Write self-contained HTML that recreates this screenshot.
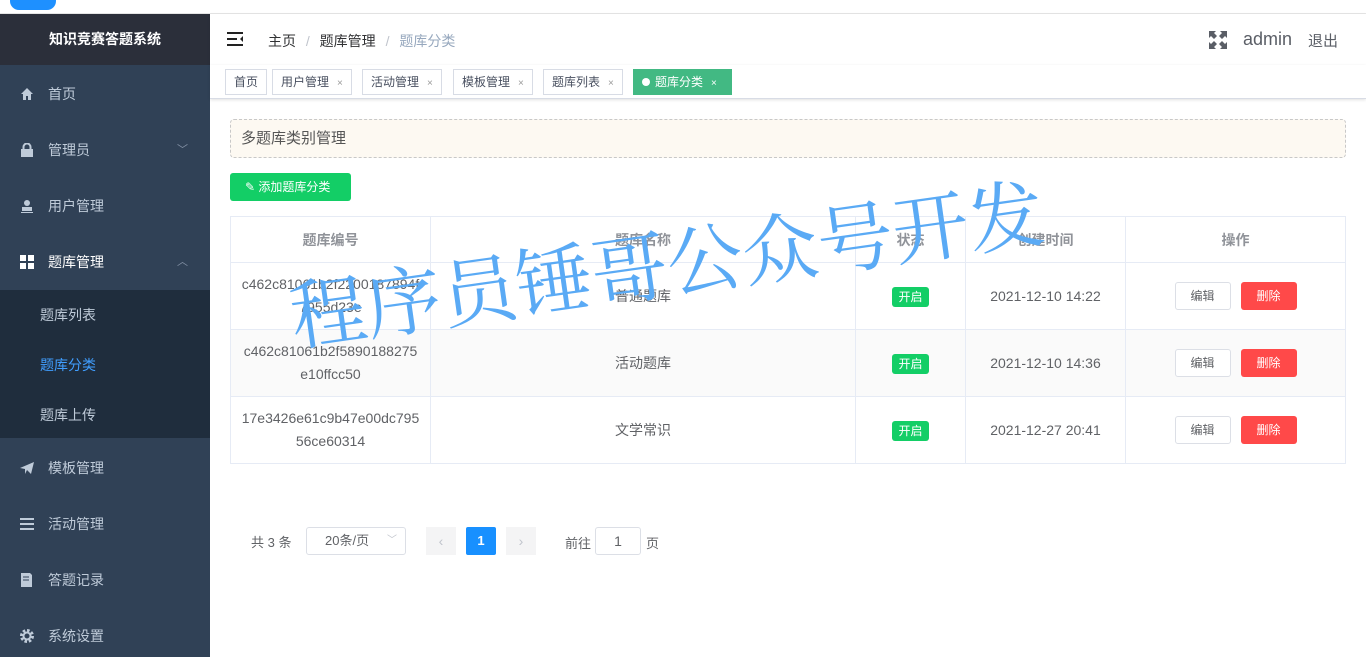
<!DOCTYPE html>
<html><head><meta charset="utf-8"><style>
*{margin:0;padding:0;box-sizing:border-box}
body{width:1366px;height:657px;overflow:hidden;position:relative;background:#fff;font-family:"Liberation Sans","Noto Sans CJK SC",sans-serif;font-size:14px;color:#606266}
.abs{position:absolute}
.side{left:0;top:14px;width:210px;height:643px;background:#304156}
.logo{left:0;top:14px;width:210px;height:51px;background:#2b2f3a;color:#fff;font-weight:bold;font-size:14px;text-align:center;line-height:51px}
.mi{position:absolute;left:0;width:210px;height:56px;line-height:56px;color:#bfcbd9;font-size:14px}
.mi .ic{position:absolute;left:20px;top:21px;width:14px;height:14px}
.mi .t{position:absolute;left:48px}
.sub{position:absolute;left:0;top:290px;width:210px;height:148px;background:#1f2d3d}
.sub div{height:50px;line-height:50px;padding-left:40px;color:#bfcbd9}
.arr{position:absolute;right:22px;color:#8391a5;font-size:11px}
.tag{position:absolute;top:69px;height:26px;line-height:24px;border:1px solid #d8dce5;font-size:12px;color:#495060;padding:0 8px;background:#fff}
.tag i{font-style:normal;color:#999;font-size:10px;margin-left:8px}
table{position:absolute;left:230px;top:216px;width:1116px;border-collapse:collapse;font-size:14px}
td,th{border:1px solid #e6ebf5;text-align:center;color:#606266}
th{height:46px;color:#909399;font-weight:bold}
td{height:67px;line-height:23px}
tr.s td{background:#fafafa}
.on{display:inline-block;background:#13ce66;color:#fff;font-size:12px;height:20px;line-height:20px;padding:0 6px;border-radius:3px}
.be{display:inline-block;width:56px;height:28px;line-height:26px;border:1px solid #dcdfe6;border-radius:3px;font-size:12px;color:#606266;background:#fff;margin-right:10px}
.bd{display:inline-block;width:56px;height:28px;line-height:28px;border-radius:3px;font-size:12px;color:#fff;background:#ff4949}
</style></head><body>
<div class="abs" style="left:0;top:0;width:1366px;height:14px;background:#fff;border-bottom:1px solid #e5e5e5"></div>
<div class="abs" style="left:10px;top:-8px;width:46px;height:18px;background:#1e90ff;border-radius:9px"></div>
<div class="abs side"></div>
<div class="abs logo">知识竞赛答题系统</div>
<div class="mi" style="top:66px"><svg class="ic" viewBox="0 0 14 14"><path d="M7 1L1 7h2v6h3V9h2v4h3V7h2z" fill="#bfcbd9"/></svg><span class="t">首页</span></div>
<div class="mi" style="top:122px"><svg class="ic" viewBox="0 0 14 14"><path d="M3.5 6V4a3.5 3.5 0 0 1 7 0v2" stroke="#bfcbd9" stroke-width="2" fill="none"/><rect x="1" y="6" width="12" height="8" fill="#bfcbd9"/></svg><span class="t">管理员</span><span class="arr">﹀</span></div>
<div class="mi" style="top:178px"><svg class="ic" viewBox="0 0 14 14"><circle cx="7" cy="4" r="3" fill="#bfcbd9"/><rect x="2" y="8" width="10" height="4" fill="#bfcbd9"/><rect x="1" y="13" width="12" height="1" fill="#bfcbd9"/></svg><span class="t">用户管理</span></div>
<div class="mi" style="top:234px;color:#fff"><svg class="ic" viewBox="0 0 14 14" fill="#fff"><rect x="0" y="0" width="6" height="6"/><rect x="8" y="0" width="6" height="6"/><rect x="0" y="8" width="6" height="6"/><rect x="8" y="8" width="6" height="6"/></svg><span class="t">题库管理</span><span class="arr">︿</span></div>
<div class="sub"><div>题库列表</div><div style="color:#409eff">题库分类</div><div>题库上传</div></div>
<div class="mi" style="top:440px"><svg class="ic" viewBox="0 0 14 14"><path d="M0 7L14 1 11 13 7 9 5 13V8z" fill="#bfcbd9"/></svg><span class="t">模板管理</span></div>
<div class="mi" style="top:496px"><svg class="ic" viewBox="0 0 14 14" fill="#bfcbd9"><rect y="1" width="14" height="2"/><rect y="6" width="14" height="2"/><rect y="11" width="14" height="2"/></svg><span class="t">活动管理</span></div>
<div class="mi" style="top:552px"><svg class="ic" viewBox="0 0 14 14"><path d="M1 0h9l2 2v12H1z" fill="#bfcbd9"/><path d="M3 4h6M3 7h6" stroke="#304156"/></svg><span class="t">答题记录</span></div>
<div class="mi" style="top:608px"><svg class="ic" viewBox="0 0 14 14"><circle cx="7" cy="7" r="5.5" fill="none" stroke="#bfcbd9" stroke-width="3" stroke-dasharray="2.5 1.8"/><circle cx="7" cy="7" r="3.5" fill="none" stroke="#bfcbd9" stroke-width="2"/></svg><span class="t">系统设置</span></div>

<div class="abs" style="left:210px;top:14px;width:1156px;height:51px;background:#fff;box-shadow:0 1px 3px rgba(0,21,41,.08)"></div>
<svg class="abs" style="left:227px;top:32px" width="17" height="14" viewBox="0 0 17 14"><path d="M0 1h16M0 7h10M0 13h16" stroke="#222" stroke-width="2"/><path d="M16 4l-3 3 3 3z" fill="#222"/></svg>
<div class="abs" style="left:268px;top:31px;font-size:14px;color:#303133">主页 <span style="color:#c0c4cc;margin:0 6px">/</span> 题库管理 <span style="color:#c0c4cc;margin:0 6px">/</span> <span style="color:#97a8be">题库分类</span></div>
<svg class="abs" style="left:1209px;top:31px" width="18" height="18" viewBox="0 0 18 18" fill="#5a5e66"><path d="M0 0h7L5 2l3 3-3 3-3-3-2 2zM18 0v7l-2-2-3 3-3-3 3-3-2-2zM0 18v-7l2 2 3-3 3 3-3 3 2 2zM18 18h-7l2-2-3-3 3-3 3 3 2-2z"/></svg>
<div class="abs" style="left:1243px;top:29px;font-size:18px;color:#5a5e66">admin</div>
<div class="abs" style="left:1308px;top:30px;font-size:15px;color:#5a5e66">退出</div>

<div class="abs" style="left:210px;top:65px;width:1156px;height:34px;background:#fff;border-bottom:1px solid #d8dce5;box-shadow:0 1px 3px rgba(0,0,0,.12)"></div>
<div class="tag" style="left:225px">首页</div>
<div class="tag" style="left:272px">用户管理<i>×</i></div>
<div class="tag" style="left:362px">活动管理<i>×</i></div>
<div class="tag" style="left:453px">模板管理<i>×</i></div>
<div class="tag" style="left:543px">题库列表<i>×</i></div>
<div class="tag" style="left:633px;width:99px;background:#42b983;border-color:#42b983;color:#fff"><span style="display:inline-block;width:8px;height:8px;border-radius:50%;background:#fff;margin-right:5px"></span>题库分类<i style="color:#fff">×</i></div>

<div class="abs" style="left:230px;top:119px;width:1116px;height:39px;background:#fdf9f2;border:1px dashed #c8c8c8;border-radius:4px;line-height:37px;padding-left:10px;font-size:15px;color:#555">多题库类别管理</div>
<div class="abs" style="left:230px;top:173px;width:121px;height:28px;background:#13ce66;border-radius:3px;color:#fff;font-size:12px;line-height:28px;padding-left:15px">✎ 添加题库分类</div>

<table>
<tr><th style="width:200px">题库编号</th><th style="width:425px">题库名称</th><th style="width:110px">状态</th><th style="width:160px">创建时间</th><th>操作</th></tr>
<tr><td>c462c81061b2f2200187894f<br>7955d23e</td><td>普通题库</td><td><span class="on">开启</span></td><td>2021-12-10 14:22</td><td><span class="be">编辑</span><span class="bd">删除</span></td></tr>
<tr class="s"><td>c462c81061b2f5890188275<br>e10ffcc50</td><td>活动题库</td><td><span class="on">开启</span></td><td>2021-12-10 14:36</td><td><span class="be">编辑</span><span class="bd">删除</span></td></tr>
<tr><td>17e3426e61c9b47e00dc795<br>56ce60314</td><td>文学常识</td><td><span class="on">开启</span></td><td>2021-12-27 20:41</td><td><span class="be">编辑</span><span class="bd">删除</span></td></tr>
</table>

<div class="abs" style="left:251px;top:532px;font-size:13px">共 3 条</div>
<div class="abs" style="left:306px;top:527px;width:100px;height:28px;border:1px solid #dcdfe6;border-radius:3px;font-size:13px;line-height:26px;padding-left:18px">20条/页<span style="position:absolute;right:8px;color:#c0c4cc;font-size:10px">﹀</span></div>
<div class="abs" style="left:426px;top:527px;width:30px;height:28px;background:#f4f4f5;color:#c0c4cc;text-align:center;line-height:28px">‹</div>
<div class="abs" style="left:466px;top:527px;width:30px;height:28px;background:#1890ff;color:#fff;text-align:center;line-height:28px;font-weight:bold;border-radius:2px;font-size:13px">1</div>
<div class="abs" style="left:506px;top:527px;width:30px;height:28px;background:#f4f4f5;color:#c0c4cc;text-align:center;line-height:28px">›</div>
<div class="abs" style="left:565px;top:533px;font-size:13px">前往</div>
<div class="abs" style="left:595px;top:527px;width:46px;height:28px;border:1px solid #dcdfe6;border-radius:3px;text-align:center;line-height:26px">1</div>
<div class="abs" style="left:646px;top:533px;font-size:13px">页</div>

<div class="abs" style="left:290px;top:258px;font-family:'Noto Serif CJK SC',serif;font-weight:400;font-size:76px;color:#5aaaf5;letter-spacing:0px;white-space:nowrap;transform:rotate(-8deg);transform-origin:left center">程序员锤哥公众号开发</div>
</body></html>
